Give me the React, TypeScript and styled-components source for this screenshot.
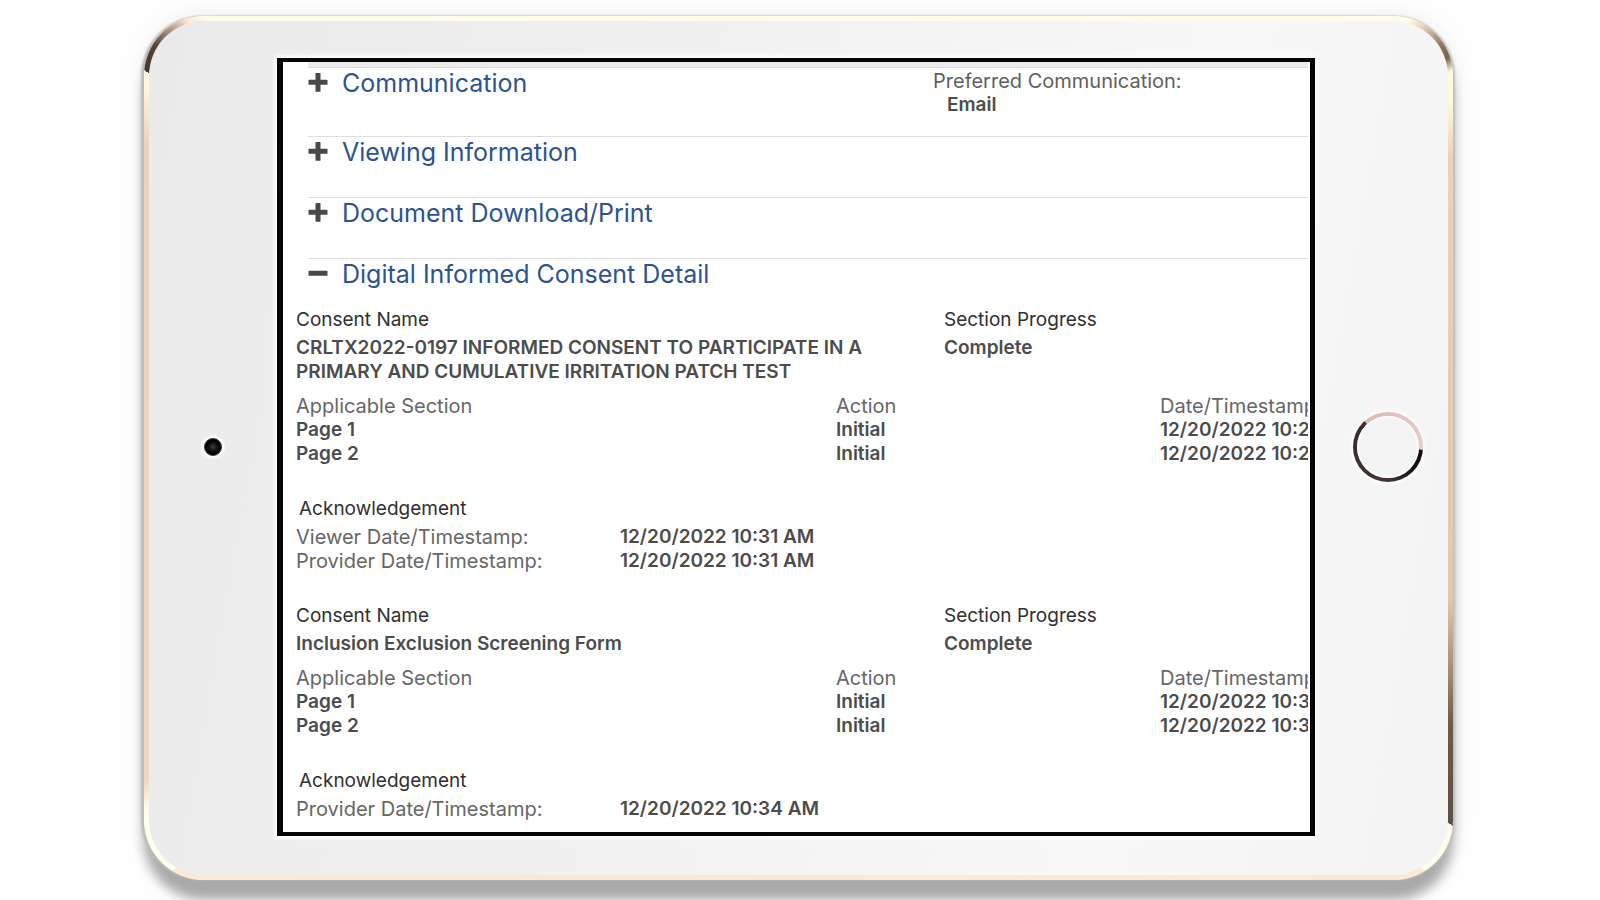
import React from "react";
import styled, { createGlobalStyle } from "styled-components";

const GlobalStyle = createGlobalStyle`
  *, *::before, *::after { box-sizing: border-box; }
  body {
    margin: 0;
    background: #fefefe;
    color: #4c4c4c;
    font-family: Inter, "Open Sans", sans-serif;
    font-size: 19px;
    line-height: 24px;
  }
  h2, h3, p, dl, dd, dt { margin: 0; font: inherit; }
`;

const Page = styled.div`
  min-height: 100vh;
  padding: 16px 147px 20px 144px;
  overflow: hidden;
`;

const Tablet = styled.div`
  display: flex;
  align-items: center;
  padding: 37px 0 39px;
  border: 5px solid transparent;
  border-radius: 60px;
  background:
    linear-gradient(100deg, #eaeaea 0%, #efefef 30%, #f8f8f8 75%, #f3f3f3 100%) padding-box,
    conic-gradient(
      #fffcea 0deg, #fffcea 55deg, #e8d0b8 56deg, #8a7560 58deg, #77634f 59deg, #fff8e0 60deg,
      #fff8e0 62deg, #e8d2bd 66deg, #e0c8ae 103deg, #a08c78 109deg, #6a5a4c 113deg, #5d5047 120deg,
      #fffcee 120deg, #fffcee 124deg, #fde8d3 124deg, #fde8d3 236deg, #fffdee 236deg,
      #fffdee 241deg, #eed7c2 243deg, #e8d2bd 295deg, #fff6de 299deg, #fff6de 300deg,
      #43362c 300deg, #54453a 302deg, #c5ab94 304deg, #ffe9d0 305deg, #fffcea 306deg
    ) border-box;
  box-shadow:
    -3px 0 2px #bcbcbc,
    2px 0 2px #c0c0c0,
    0 20px 12px #a9a9a9,
    0 0 24px rgba(0, 0, 0, 0.08);
`;

const CameraSide = styled.div`
  flex: 0 0 128px;
  display: flex;
  justify-content: center;
`;

const Camera = styled.span`
  width: 18px;
  height: 18px;
  border: 1px solid #333333;
  border-radius: 50%;
  background: radial-gradient(circle, #34414f 0, #15191d 30%, #030303 55%);
  box-shadow: 0 0 2px 3px #fbfbfb;
`;

const HomeSide = styled.div`
  flex: 0 0 133px;
  display: flex;
  justify-content: center;
  padding-left: 13px;
`;

const HomeButton = styled.button`
  width: 70px;
  height: 70px;
  padding: 0;
  border: 4px solid transparent;
  border-radius: 50%;
  background:
    linear-gradient(#f3f3f3, #f3f3f3) padding-box,
    conic-gradient(#e2bfbb 0deg, #e8cbc8 94deg, #120d0d 95deg, #1a1212 130deg, #443534 180deg, #392b2a 317deg, #dcb9b4 318deg, #e2bfbb 360deg) border-box;
  box-shadow: 0 0 2px 3px #fbfbfb, inset 0 0 2px 2px #fbfbfb;
`;

const Screen = styled.main`
  flex: 1 1 0;
  min-width: 0;
  border: solid #050505;
  border-width: 4px 5px 4px 6px;
  background: #ffffff;
  box-shadow: 0 0 3px 3px #fcfcfc;
  overflow: hidden;
`;

const Clip = styled.div`
  margin-right: 2px;
  padding-bottom: 11px;
  overflow: hidden;
`;

const TopStrip = styled.div`
  height: 6px;
  border-top: 3px solid #ececec;
  border-bottom: 1px solid #dedede;
  margin-left: 25px;
  background: #ececec;
`;

const Section = styled.section<{ $height: number; $first?: boolean }>`
  display: grid;
  grid-template-columns: 625px 1fr;
  align-items: start;
  min-height: ${(p) => p.$height}px;
  margin-left: 25px;
  border-top: ${(p) => (p.$first ? "0" : "1px solid #dddddd")};
`;

const SectionTitle = styled.h2`
  padding-top: 1px;
`;

const Toggle = styled.button`
  display: flex;
  align-items: center;
  gap: 14px;
  padding: 0;
  border: 0;
  background: none;
  color: #2d5391;
  font: inherit;
  font-size: 25px;
  line-height: 28px;
  white-space: nowrap;
  cursor: pointer;
`;

const ToggleIcon = styled.svg`
  width: 20px;
  height: 20px;
  fill: #484848;
`;

const Preference = styled.dl`
  padding-top: 1px;
`;

const PreferenceLabel = styled.dt`
  && { font-size: 20px; color: #5f5f5f; }
`;

const PreferenceValue = styled.dd`
  && { padding-left: 14px; font-weight: 600; }
`;

const Consent = styled.article`
  width: 1296px;
  margin: 0 0 31px 13px;
  &:last-child { margin-bottom: 0; }
`;

const Summary = styled.dl`
  display: grid;
  grid-template-columns: 1fr 1fr;
  && { margin-bottom: 10px; }
`;

const Term = styled.dt`
  && { margin-bottom: 4px; color: #303030; }
`;

const Value = styled.dd`
  && { padding-right: 48px; font-weight: 600; }
`;

const SectionTable = styled.table`
  width: 100%;
  table-layout: fixed;
  border-collapse: collapse;
  text-align: left;
  margin-bottom: 31px;
`;

const HeadCell = styled.th<{ $span: number }>`
  width: calc(100% * ${(p) => p.$span} / 12);
  padding: 0;
  font-size: 20px;
  font-weight: 400;
  color: #666666;
`;

const Cell = styled.td`
  padding: 0;
  font-weight: 600;
`;

const AckTitle = styled.h3`
  && { margin: 0 0 4px 3px; color: #303030; }
`;

const AckRow = styled.div`
  display: grid;
  grid-template-columns: 3fr 9fr;
`;

const AckLabel = styled.dt`
  && { font-size: 20px; color: #666666; }
`;

const AckValue = styled.dd`
  && { font-weight: 600; }
`;

function Icon({ open }: { open?: boolean }) {
  return (
    <ToggleIcon viewBox="0 0 20 20" aria-hidden="true">
      <rect x="0.5" y="6.8" width="19" height="5" rx="0.6" />
      {!open && <rect x="7.5" y="0" width="5" height="18.8" rx="0.6" />}
    </ToggleIcon>
  );
}

function Heading({ label, open }: { label: string; open?: boolean }) {
  return (
    <SectionTitle>
      <Toggle type="button" aria-expanded={!!open}>
        <Icon open={open} />
        {label}
      </Toggle>
    </SectionTitle>
  );
}

type ConsentData = {
  name: string;
  progress: string;
  rows: { page: string; action: string; time: string }[];
  acknowledgements: { label: string; time: string }[];
};

const consents: ConsentData[] = [
  {
    name: "CRLTX2022-0197 INFORMED CONSENT TO PARTICIPATE IN A PRIMARY AND CUMULATIVE IRRITATION PATCH TEST",
    progress: "Complete",
    rows: [
      { page: "Page 1", action: "Initial", time: "12/20/2022 10:2" },
      { page: "Page 2", action: "Initial", time: "12/20/2022 10:2" },
    ],
    acknowledgements: [
      { label: "Viewer Date/Timestamp:", time: "12/20/2022 10:31 AM" },
      { label: "Provider Date/Timestamp:", time: "12/20/2022 10:31 AM" },
    ],
  },
  {
    name: "Inclusion Exclusion Screening Form",
    progress: "Complete",
    rows: [
      { page: "Page 1", action: "Initial", time: "12/20/2022 10:3" },
      { page: "Page 2", action: "Initial", time: "12/20/2022 10:3" },
    ],
    acknowledgements: [{ label: "Provider Date/Timestamp:", time: "12/20/2022 10:34 AM" }],
  },
];

function ConsentBlock({ data }: { data: ConsentData }) {
  return (
    <Consent>
      <Summary>
        <div>
          <Term>Consent Name</Term>
          <Value>{data.name}</Value>
        </div>
        <div>
          <Term>Section Progress</Term>
          <Value>{data.progress}</Value>
        </div>
      </Summary>
      <SectionTable>
        <thead>
          <tr>
            <HeadCell $span={5}>Applicable Section</HeadCell>
            <HeadCell $span={3}>Action</HeadCell>
            <HeadCell $span={4}>Date/Timestamp</HeadCell>
          </tr>
        </thead>
        <tbody>
          {data.rows.map((row) => (
            <tr key={row.page}>
              <Cell>{row.page}</Cell>
              <Cell>{row.action}</Cell>
              <Cell>{row.time}</Cell>
            </tr>
          ))}
        </tbody>
      </SectionTable>
      <AckTitle>Acknowledgement</AckTitle>
      <dl>
        {data.acknowledgements.map((ack) => (
          <AckRow key={ack.label}>
            <AckLabel>{ack.label}</AckLabel>
            <AckValue>{ack.time}</AckValue>
          </AckRow>
        ))}
      </dl>
    </Consent>
  );
}

export default function App() {
  return (
    <>
      <GlobalStyle />
      <Page>
        <Tablet>
          <CameraSide>
            <Camera />
          </CameraSide>
          <Screen>
            <Clip>
              <TopStrip />
              <Section $height={68} $first>
                <Heading label="Communication" />
                <Preference>
                  <PreferenceLabel>Preferred Communication:</PreferenceLabel>
                  <PreferenceValue>Email</PreferenceValue>
                </Preference>
              </Section>
              <Section $height={61}>
                <Heading label="Viewing Information" />
              </Section>
              <Section $height={61}>
                <Heading label="Document Download/Print" />
              </Section>
              <Section $height={50}>
                <Heading label="Digital Informed Consent Detail" open />
              </Section>
              {consents.map((consent) => (
                <ConsentBlock key={consent.name} data={consent} />
              ))}
            </Clip>
          </Screen>
          <HomeSide>
            <HomeButton type="button" aria-label="Home" />
          </HomeSide>
        </Tablet>
      </Page>
    </>
  );
}
